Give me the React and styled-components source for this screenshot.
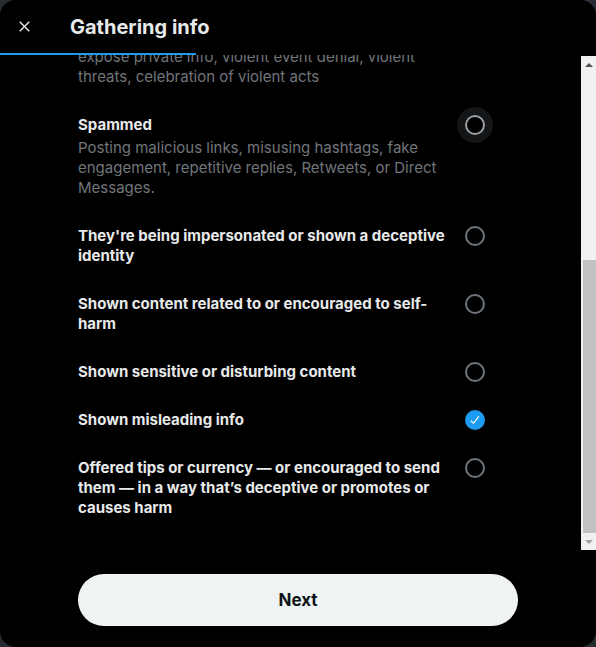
import React from 'react';
import styled, { createGlobalStyle } from 'styled-components';

const GlobalStyle = createGlobalStyle`
  * { box-sizing: border-box; }
  html, body {
    margin: 0;
    padding: 0;
    background: #262c31;
  }
  body {
    font-family: Inter, "Noto Sans", sans-serif;
    -webkit-font-smoothing: antialiased;
  }
`;

const options = [
  {
    title: 'Spammed',
    desc: 'Posting malicious links, misusing hashtags, fake engagement, repetitive replies, Retweets, or Direct Messages.',
    hover: true,
  },
  { title: "They're being impersonated or shown a deceptive identity" },
  { title: 'Shown content related to or encouraged to self-harm' },
  { title: 'Shown sensitive or disturbing content' },
  { title: 'Shown misleading info', checked: true },
  {
    title:
      'Offered tips or currency \u2014 or encouraged to send them \u2014 in a way that\u2019s deceptive or promotes or causes harm',
  },
];

const App = () => {
  return (
    <>
      <GlobalStyle />
      <Modal>
        <Header>
          <CloseButton aria-label="Close">
            <svg width="17" height="17" viewBox="0 0 24 24">
              <path
                d="M10.59 12L4.54 5.96l1.42-1.42L12 10.59l6.04-6.05 1.42 1.42L13.41 12l6.05 6.04-1.42 1.42L12 13.41l-6.04 6.05-1.42-1.42L10.59 12z"
                fill="#e7e9ea"
              />
            </svg>
          </CloseButton>
          <Title>Gathering info</Title>
        </Header>
        <Progress>
          <ProgressFill style={{ width: `${(196 / 596) * 100}%` }} />
        </Progress>
        <Body>
          <ScrollArea>
            <ScrollContent style={{ marginTop: -8 }}>
              <ClippedDesc>
                expose private info, violent event denial, violent
                <br />
                threats, celebration of violent acts
              </ClippedDesc>
              {options.map(o => (
                <Option key={o.title}>
                  <OptionText>
                    <OptionTitle>{o.title}</OptionTitle>
                    {o.desc && <OptionDesc>{o.desc}</OptionDesc>}
                  </OptionText>
                  <Radio $checked={o.checked} $hover={o.hover}>
                    {o.checked && (
                      <svg width="14" height="14" viewBox="0 0 24 24">
                        <path
                          d="M9.64 18.952l-5.55-4.861 1.317-1.504 3.951 3.459 8.459-10.948L19.4 6.32 9.64 18.952z"
                          fill="#fff"
                        />
                      </svg>
                    )}
                  </Radio>
                </Option>
              ))}
            </ScrollContent>
          </ScrollArea>
          <Scrollbar>
            <ScrollButton>
              <ArrowUp />
            </ScrollButton>
            <ScrollTrack>
              <ScrollThumb style={{ marginTop: 187, height: 273 }} />
            </ScrollTrack>
            <ScrollButton>
              <ArrowDown />
            </ScrollButton>
          </Scrollbar>
        </Body>
        <Footer>
          <NextButton>Next</NextButton>
        </Footer>
      </Modal>
    </>
  );
};

export default App;

const Modal = styled.div`
  width: 596px;
  height: 647px;
  background: #000;
  border-radius: 16px;
  overflow: hidden;
  display: flex;
  flex-direction: column;
  color: #e7e9ea;
`;

const Header = styled.div`
  height: 53px;
  display: flex;
  align-items: center;
  padding: 0 0 0 15px;
  flex-shrink: 0;
  position: relative;
  z-index: 1;
  background: #000;
`;

const CloseButton = styled.div`
  width: 18px;
  height: 20px;
  display: flex;
  align-items: center;
  justify-content: center;
  margin-right: 37px;
`;

const Title = styled.h2`
  margin: 0;
  font-size: 20px;
  font-weight: 700;
  line-height: 24px;
  color: #e7e9ea;
`;

const Progress = styled.div`
  height: 2px;
  flex-shrink: 0;
  background: transparent;
  position: relative;
  z-index: 1;
`;

const ProgressFill = styled.div`
  height: 100%;
  background: #1d9bf0;
`;

const Body = styled.div`
  display: flex;
  height: 495px;
  flex-shrink: 0;
`;

const ScrollArea = styled.div`
  flex: 1;
  overflow: hidden;
`;

const ScrollContent = styled.div`
  padding: 0 96px 0 78px;
`;

const ClippedDesc = styled.div`
  font-size: 15px;
  line-height: 20px;
  color: #71767b;
  padding-bottom: 14px;
  white-space: nowrap;
`;

const Option = styled.div`
  display: flex;
  align-items: flex-start;
  gap: 20px;
  padding: 14px 0;
`;

const OptionText = styled.div`
  flex: 1;
  min-width: 0;
`;

const OptionTitle = styled.div`
  font-size: 15px;
  font-weight: 700;
  line-height: 20px;
  color: #e7e9ea;
`;

const OptionDesc = styled.div`
  margin-top: 3px;
  font-size: 15px;
  line-height: 20px;
  color: #71767b;
`;

const Radio = styled.div`
  width: 20px;
  height: 20px;
  flex-shrink: 0;
  border-radius: 50%;
  display: flex;
  align-items: center;
  justify-content: center;
  border: ${p => (p.$checked ? 'none' : `2px solid ${p.$hover ? '#9ca1a5' : '#6e767d'}`)};
  background: ${p => (p.$checked ? '#1d9bf0' : 'transparent')};
  box-shadow: ${p => (p.$hover ? '0 0 0 8px #141516' : 'none')};
`;

const Scrollbar = styled.div`
  width: 15px;
  flex-shrink: 0;
  margin-top: 1px;
  background: #f1f1f1;
  display: flex;
  flex-direction: column;
`;

const ScrollButton = styled.div`
  height: 17px;
  display: flex;
  align-items: center;
  justify-content: center;
  flex-shrink: 0;
`;

const ArrowUp = styled.div`
  width: 0;
  height: 0;
  border-left: 4px solid transparent;
  border-right: 4px solid transparent;
  border-bottom: 4px solid #505050;
`;

const ArrowDown = styled.div`
  width: 0;
  height: 0;
  border-left: 4px solid transparent;
  border-right: 4px solid transparent;
  border-top: 4px solid #a3a3a3;
`;

const ScrollTrack = styled.div`
  flex: 1;
  display: flex;
  flex-direction: column;
  padding-left: 2px;
`;

const ScrollThumb = styled.div`
  background: #c1c1c1;
`;

const Footer = styled.div`
  flex: 1;
  display: flex;
  justify-content: center;
  padding-top: 24px;
`;

const NextButton = styled.button`
  width: 440px;
  height: 52px;
  border: none;
  border-radius: 9999px;
  background: #eff3f4;
  color: #0f1419;
  font-family: Inter, "Noto Sans", sans-serif;
  font-size: 17px;
  font-weight: 700;
  cursor: pointer;
`;
